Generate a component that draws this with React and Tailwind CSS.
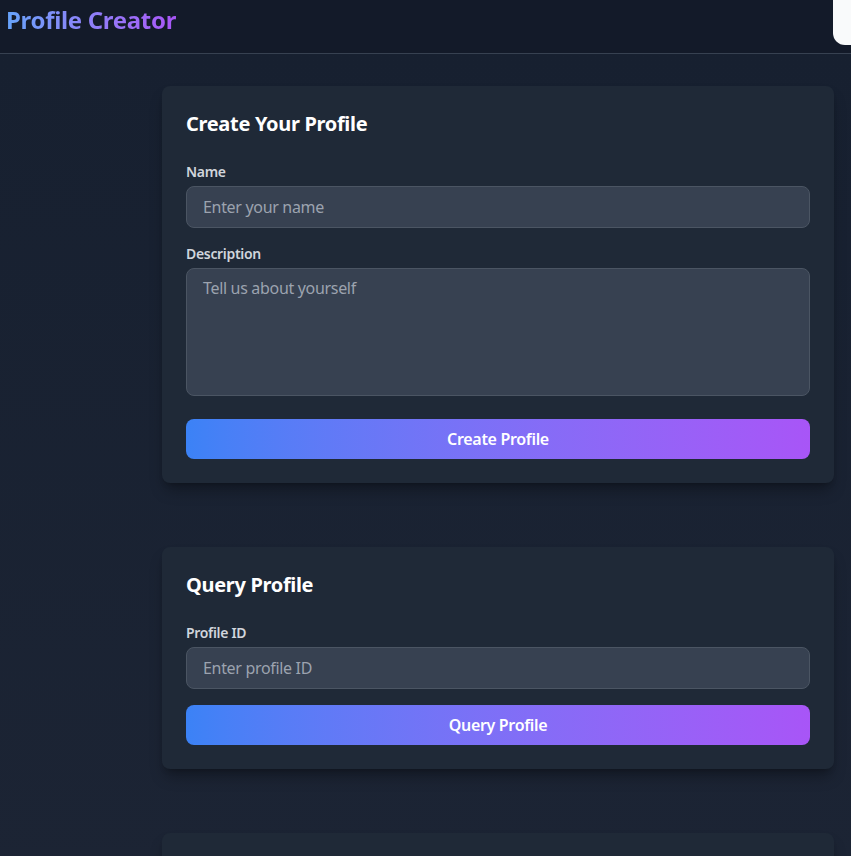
import React from "react";

function Card({ title, children }) {
  return (
    <div className="w-[672px] rounded-lg bg-[#1f2937] p-6 shadow-lg shadow-black/30">
      <h2 className="mb-6 text-xl font-bold leading-7 text-white">{title}</h2>
      {children}
    </div>
  );
}

function Label({ children }) {
  return <div className="mb-1 text-sm font-semibold leading-5 text-gray-300">{children}</div>;
}

function Input({ placeholder }) {
  return (
    <div className="flex h-[42px] items-center rounded-lg border border-[#4b5563] bg-[#374151] px-4 text-base text-[#9ca3af]">
      {placeholder}
    </div>
  );
}

function Button({ children }) {
  return (
    <div className="flex h-10 items-center justify-center rounded-lg bg-gradient-to-r from-[#3b82f6] to-[#a855f7] text-base font-semibold text-white">
      {children}
    </div>
  );
}

export default function App() {
  return (
    <div
      className="flex h-[856px] flex-col overflow-hidden bg-[#111827] tracking-[-0.02em]"
      style={{ fontFamily: '"Noto Sans", "Open Sans", sans-serif' }}
    >
      <header className="flex h-[54px] shrink-0 items-start justify-between border-b border-[#374151] bg-[#131a29]">
        <h1 className="mt-[4px] pl-[6px] text-2xl font-bold leading-8 bg-gradient-to-r from-[#60a5fa] to-[#a855f7] bg-clip-text text-transparent">
          Profile Creator
        </h1>
        <div className="h-[45px] w-[18px] rounded-bl-[12px] bg-[#f9fafb]" />
      </header>
      <main className="flex flex-1 flex-col gap-16 bg-gradient-to-b from-[#172030] to-[#1d2535] pl-[162px] pt-8">
        <Card title="Create Your Profile">
          <div className="flex flex-col">
            <Label>Name</Label>
            <Input placeholder="Enter your name" />
            <div className="mt-4">
              <Label>Description</Label>
              <div className="h-32 rounded-lg border border-[#4b5563] bg-[#374151] px-4 py-[7px] text-base leading-6 text-[#9ca3af]">
                Tell us about yourself
              </div>
            </div>
            <div className="mt-[23px]">
              <Button>Create Profile</Button>
            </div>
          </div>
        </Card>
        <Card title="Query Profile">
          <div className="flex flex-col">
            <Label>Profile ID</Label>
            <Input placeholder="Enter profile ID" />
            <div className="mt-4">
              <Button>Query Profile</Button>
            </div>
          </div>
        </Card>
        <Card title="">
          <div className="h-40" />
        </Card>
      </main>
    </div>
  );
}
